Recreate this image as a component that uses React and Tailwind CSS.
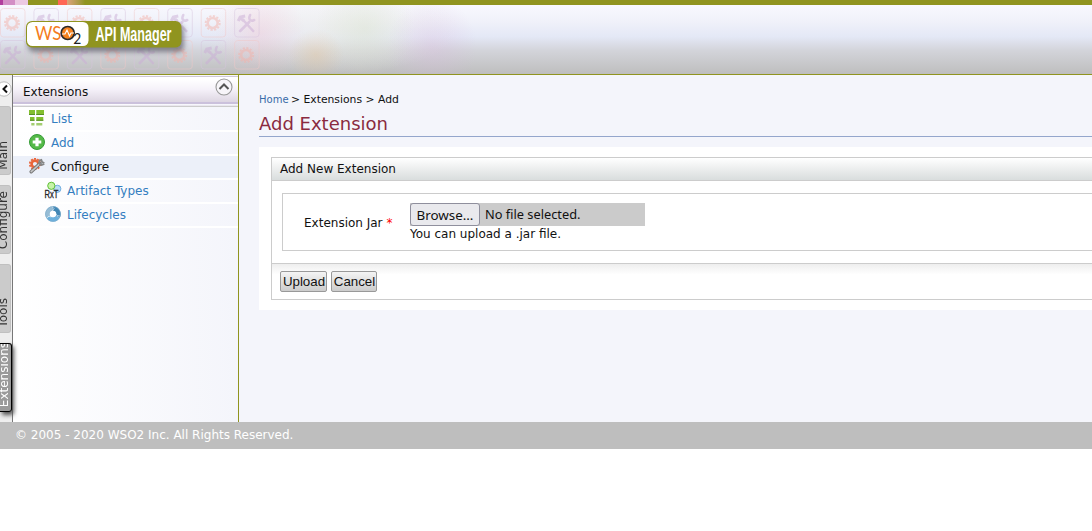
import React from "react";

const COLUMNS = [0, 1, 2, 3, 4, 5, 6, 7];

function Gear({ x, y }) {
  return (
    <g transform={`translate(${x} ${y})`} stroke="#f3b3ab" fill="none">
      <circle r="5" strokeWidth="2.6" />
      <circle r="7" strokeWidth="2" strokeDasharray="2.2 1.46" />
    </g>
  );
}

function Tools({ x, y }) {
  return (
    <g transform={`translate(${x} ${y})`} stroke="#cbaed6" fill="none" strokeLinecap="round">
      <path d="M-3 -3 L7 8" strokeWidth="2.6" />
      <path d="M-8 -2 L-6 -6 L-1 -7 M-6 -5 L-2 -2" strokeWidth="3" strokeLinecap="butt" />
      <path d="M3 -1 L-6 8" strokeWidth="2.8" />
      <path d="M4 -8 C2 -4 4 -1 8 -3" strokeWidth="2.6" />
    </g>
  );
}

function Tiles() {
  return (
    <svg className="absolute left-0 top-0 opacity-50" width="270" height="69" viewBox="0 5 270 69">
      {[0, 1].map((row) =>
        COLUMNS.map((col) => {
          const x = col * 33.45 + 0.5;
          const y = row ? 40.5 : 8.5;
          const isGear = (col + row) % 2 === 0;
          return (
            <g key={`${row}-${col}`}>
              <rect x={x} y={y} width="24.5" height="28.5" rx="3" fill="none" stroke={isGear ? "#f0c8c8" : "#d6c4dd"} strokeWidth="1" />
              {isGear ? <Gear x={x + 11.5} y={y + 14.5} /> : <Tools x={x + 11.5} y={y + 14.5} />}
            </g>
          );
        })
      )}
    </svg>
  );
}

function Logo() {
  return (
    <svg className="absolute left-[20px] top-[10px] overflow-visible" width="175" height="50" viewBox="20 15 175 50">
      <defs>
        <filter id="shade" x="-10%" y="-30%" width="125%" height="180%">
          <feGaussianBlur stdDeviation="2.4" />
        </filter>
      </defs>
      <rect x="28" y="25" width="156" height="27" rx="6" fill="#666670" opacity="0.75" filter="url(#shade)" />
      <rect x="26" y="21" width="155.5" height="26.5" rx="6" fill="#90941f" />
      <rect x="27" y="22" width="61.5" height="24" rx="5.5" fill="#fff" />
      <text x="35" y="40" fontFamily="Lato, sans-serif" fontSize="19" fill="#f47b20" textLength="26.5" lengthAdjust="spacingAndGlyphs">WS</text>
      <circle cx="67.7" cy="33" r="6.5" fill="#f58220" stroke="#2b2b2b" strokeWidth="1.7" />
      <path d="M62 34h3l2-4 2.5 6 1.5-3h3" fill="none" stroke="#fff" strokeWidth="1.1" />
      <text x="73.3" y="43.5" fontFamily="Lato, sans-serif" fontSize="15" fill="#222" textLength="8" lengthAdjust="spacingAndGlyphs">2</text>
      <text x="95.5" y="41.3" fontFamily="'Liberation Sans', sans-serif" fontWeight="bold" fontSize="19.5" fill="#fff" textLength="76" lengthAdjust="spacingAndGlyphs">API Manager</text>
    </svg>
  );
}

function ListIcon() {
  return (
    <svg width="16" height="16" viewBox="0 0 16 16">
      <path d="M0 0h6v5H0zM7.3 0H15v5H7.3zM1 7h4.5v3.7H1zM7.3 7h7v3.7h-7z" fill="#83bf2f" />
      <path d="M0 4h6v1H0zM7.3 4H15v1H7.3zM1 9.7h4.5v1H1zM7.3 9.7h7v1h-7z" fill="#568f25" />
      <path d="M2.3 13h3.2v2.6H2.3zM7.3 13h6v2.6h-6z" fill="#a2cd70" />
    </svg>
  );
}

function AddIcon() {
  return (
    <svg width="16" height="16" viewBox="0 0 16 16">
      <circle cx="8" cy="8" r="7.5" fill="#55b948" stroke="#359c36" />
      <path d="M8 3.7v8.6M3.7 8h8.6" stroke="#fff" strokeWidth="3.2" />
    </svg>
  );
}

function ConfigureIcon() {
  return (
    <svg width="16" height="16" viewBox="0 0 16 16" fill="none">
      <circle cx="6" cy="6" r="3.4" stroke="#e9653a" strokeWidth="2.6" />
      <circle cx="6" cy="6" r="5.2" stroke="#e9653a" strokeWidth="1.8" strokeDasharray="2 1.27" />
      <path d="M2.2 13.8L11 5.5" stroke="#777" strokeWidth="3.4" strokeLinecap="round" />
      <path d="M2.2 13.6L10.8 5.8" stroke="#c6c6c6" strokeWidth="1.5" strokeLinecap="round" />
      <path d="M11.5 1.5c-2 2-1.5 5 1 5.5l2.8-1.2M12 1.2l1.2 3 2.2.8" stroke="#858585" strokeWidth="1.8" />
    </svg>
  );
}

function ArtifactIcon() {
  return (
    <svg width="16" height="16" viewBox="0 0 16 16" className="overflow-visible">
      <circle cx="12.3" cy="6.8" r="3.6" fill="#b9dcf5" stroke="#72aee0" />
      <circle cx="6.3" cy="3.8" r="3.6" fill="#c7f3a8" stroke="#5ebf35" />
      <text x="-0.5" y="16" fontFamily="'Liberation Sans', sans-serif" fontSize="10.5" fill="#222" stroke="#222" strokeWidth="0.3" textLength="14" lengthAdjust="spacingAndGlyphs">RxT</text>
    </svg>
  );
}

function CycleIcon() {
  return (
    <svg width="16" height="16" viewBox="0 0 16 16" fill="none" strokeWidth="4.6">
      <path d="M8 2.6A5.4 5.4 0 0 1 12.7 10.7" stroke="#4287b5" />
      <path d="M12.7 10.7A5.4 5.4 0 0 1 3.3 10.7" stroke="#6db0dc" />
      <path d="M3.3 10.7A5.4 5.4 0 0 1 8 2.6" stroke="#96bcd5" />
      <circle cx="8" cy="8" r="3.2" fill="#fff" stroke="none" />
      <path d="M7 .5l2 2-1.5 2.5M15 10l-3-.3-1-2M1.8 12.4l2-2.2 2.5.8" stroke="#fff" strokeWidth="0.6" />
      <circle cx="8" cy="8" r="7.5" stroke="#78a9c9" strokeWidth="0.6" />
    </svg>
  );
}

const MENU = [
  { label: "List", Icon: ListIcon },
  { label: "Add", Icon: AddIcon },
  { label: "Configure", Icon: ConfigureIcon, active: true },
  { label: "Artifact Types", Icon: ArtifactIcon, nested: true },
  { label: "Lifecycles", Icon: CycleIcon, nested: true },
];

function Header() {
  return (
    <header className="h-[75px] border-b border-[#90941f]">
      <div className="flex h-[5px] bg-[#909420]">
        <i className="w-[3px] bg-[#b13f9d]" />
        <i className="w-3 bg-[#d38fc5]" />
        <i className="w-[13px] bg-[#ecc9e3]" />
        <i className="w-[30px]" />
        <i className="w-[9px] bg-[#ff6655]" />
        <i className="w-[18px] bg-linear-to-r from-[#dda27c] to-[#909420]" />
      </div>
      <div className="relative h-[69px] bg-[linear-gradient(to_bottom,#f8f8fe_0%,#f1f2fa_22%,#e4e8f6_46%,#d3d4da_66%,#bebebe_100%)]">
        <div className="absolute inset-y-0 left-0 w-[520px] bg-[radial-gradient(ellipse_45px_50px_at_260px_28px,#f3bccc55,transparent),radial-gradient(ellipse_28px_26px_at_316px_50px,#e5c08c55,transparent),radial-gradient(ellipse_50px_50px_at_365px_24px,#d3dfc055,transparent),radial-gradient(ellipse_45px_50px_at_432px_42px,#d8b8dd55,transparent),radial-gradient(ellipse_130px_45px_at_330px_24px,#eeeeea99,transparent)]" />
        <Tiles />
        <Logo />
      </div>
    </header>
  );
}

function SideTabs() {
  return (
    <div className="flex w-[13px] shrink-0 flex-col overflow-visible border-r border-[#777] bg-[#eee] text-[12px]">
      <div className="h-[31px] w-3 overflow-hidden pt-[6px]">
        <svg width="12" height="17" viewBox="0 0 12 17">
          <circle cx="4" cy="8" r="7.2" fill="#fff" stroke="#bbb" />
          <path d="M7 4.5L3.5 8L7 11.5" fill="none" stroke="#111" strokeWidth="2" />
        </svg>
      </div>
      <div className="flex flex-col gap-[10px]">
        {["Main", "Configure", "Tools"].map((label) => (
          <div key={label} className="flex h-[69px] w-[11px] items-end justify-end overflow-hidden rounded-r-[3px] border-y border-r border-[#c0c0c0] bg-[#cbcbcb] pb-[4px] text-[#333]">
            <span className="rotate-180 leading-[14px] [writing-mode:vertical-rl]">{label}</span>
          </div>
        ))}
        <div className="relative z-10 h-[69px] w-3 rounded-r-[3px] shadow-[2px_3px_4px_#555]">
          <div className="flex h-full w-3 items-end justify-end overflow-hidden rounded-r-[3px] border-y border-r border-black bg-[#9a9a9a] pb-[4px] text-white">
            <span className="rotate-180 leading-[14px] [writing-mode:vertical-rl]">Extensions</span>
          </div>
        </div>
      </div>
    </div>
  );
}

function Menu() {
  return (
    <nav className="w-[226px] shrink-0 border-r border-[#90941f] bg-linear-to-r from-white to-[#f4f5fb] pt-px">
      <div className="flex h-7 items-center justify-between border-t border-b-2 border-t-[#cfc8d8] border-b-[#cbc1dc] bg-linear-to-b from-white from-10% via-[#f5f1f9] to-[#ddd6e2] pl-[10px] pr-[5px] text-[12px] text-[#111]">
        <span className="pt-[5px] leading-[14px]">Extensions</span>
        <svg width="18" height="18" viewBox="0 0 18 18" className="mb-[5px]">
          <circle cx="9" cy="9" r="8" fill="#f7f5f9" stroke="#999" strokeWidth="1.1" />
          <path d="M4.5 11L9 6.5L13.5 11" fill="none" stroke="#555" strokeWidth="2" />
        </svg>
      </div>
      <div className="mt-px mb-px h-[2px] border-b border-[#ccc] bg-[#eae7ef]" />
      <ul>
        {MENU.map(({ label, Icon, active, nested }) => (
          <li
            key={label}
            className={`flex h-6 items-start gap-[6px] border-b-2 border-white pt-[2px] text-[12px] ${nested ? "pl-8" : "pl-4"} ${active ? "bg-[#ecf0f9] text-[#111]" : "text-[#347ec0]"}`}
          >
            <Icon />
            <span className="leading-[18px]">{label}</span>
          </li>
        ))}
      </ul>
    </nav>
  );
}

function Content() {
  return (
    <main className="min-w-0 flex-1 bg-[#f4f5fb] pl-5 pt-[17px] text-[#111]">
      <div className="text-[10.8px] leading-[15px]">
        <span className="-mr-px text-[10px] text-[#386ba8]">Home</span> &gt; Extensions &gt; Add
      </div>
      <h1 className="mt-[3px] h-[27px] border-b border-[#94a6cc] text-[18px] leading-[27px] text-[#8a2b40]">Add Extension</h1>
      <div className="mt-[10px] h-[163px] bg-white pl-3 pt-[10px] text-[12px]">
        <div className="h-[143px] border-y border-l border-[#ccc]">
          <div className="h-[23px] border-b border-[#ccc] bg-linear-to-b from-white to-[#d9dddd] pl-2 leading-[22px]">Add New Extension</div>
          <div className="h-[83px] border-b border-[#ccc] pl-[10px] pt-3">
            <div className="flex h-[58px] border-y border-l border-[#ccc] pl-[21px] pt-[9px]">
              <div className="w-[106px] pt-[13px] leading-[15px]">
                Extension Jar <span className="text-[#ff0000]">*</span>
              </div>
              <div>
                <div className="flex h-[23px] w-[235px] items-center bg-[#cbcbcb] font-['Noto_Sans',sans-serif] text-[13.4px]">
                  <button className="h-[23px] w-[70px] whitespace-nowrap rounded-[3px] border border-[#8f8f9d] bg-[#e9e9ed] pt-px leading-[21px]">Browse…</button>
                  <span className="ml-[5px] text-[12.8px] leading-[23px]">No file selected.</span>
                </div>
                <div className="pt-px leading-[15px]">You can upload a .jar file.</div>
              </div>
            </div>
          </div>
          <div className="flex h-[35px] gap-1 bg-linear-to-b from-[#eee] to-white to-30% pl-2 pt-[7px] font-['Liberation_Sans',sans-serif] text-[13.33px]">
            <button className="h-[21px] w-[47px] rounded-[2px] border border-[#999] bg-linear-to-b from-[#f4f4f4] to-[#ccc] pl-px leading-[19px]">Upload</button>
            <button className="h-[21px] w-[46px] rounded-[2px] border border-[#999] bg-linear-to-b from-[#f4f4f4] to-[#ccc] pl-px leading-[19px]">Cancel</button>
          </div>
        </div>
      </div>
    </main>
  );
}

export default function App() {
  return (
    <div className="h-[531px] overflow-hidden bg-white font-['DejaVu_Sans',sans-serif]">
      <Header />
      <div className="flex h-[347px]">
        <SideTabs />
        <Menu />
        <Content />
      </div>
      <footer className="h-[27px] bg-[#bebebe] pl-[15px] text-[12px] leading-[26px] text-white">© 2005 - 2020 WSO2 Inc. All Rights Reserved.</footer>
    </div>
  );
}
